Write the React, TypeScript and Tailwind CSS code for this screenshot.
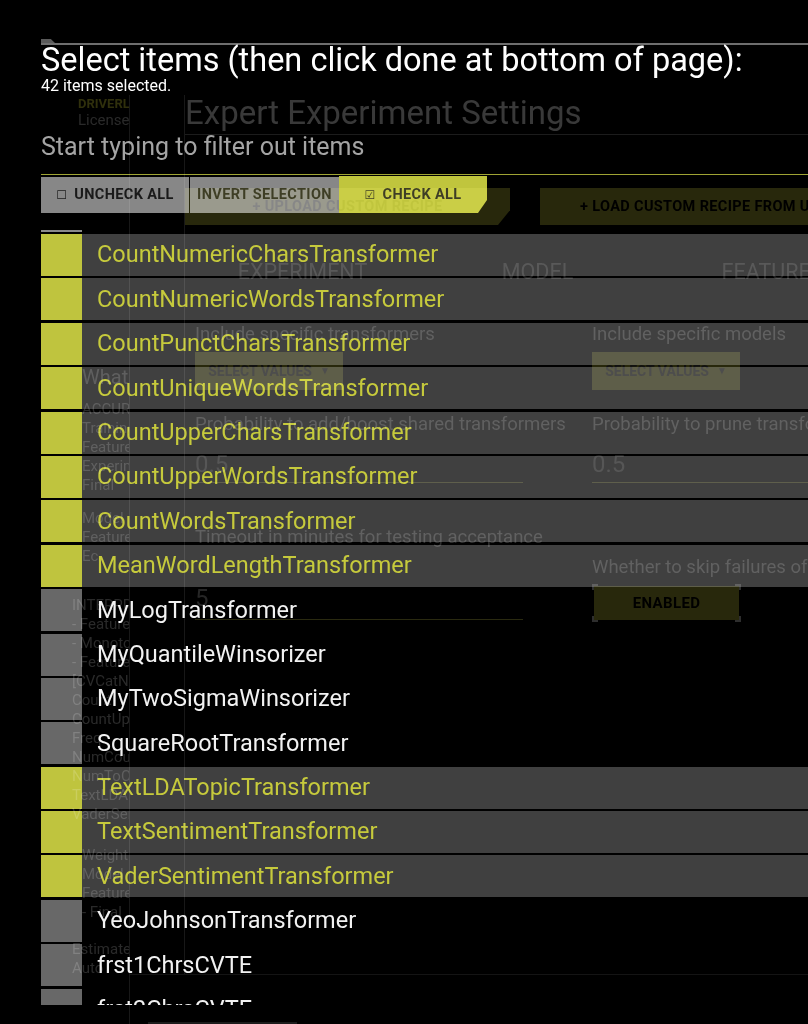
import React from 'react'

const items: [string, boolean][] = [
  ['CountNumericCharsTransformer', true],
  ['CountNumericWordsTransformer', true],
  ['CountPunctCharsTransformer', true],
  ['CountUniqueWordsTransformer', true],
  ['CountUpperCharsTransformer', true],
  ['CountUpperWordsTransformer', true],
  ['CountWordsTransformer', true],
  ['MeanWordLengthTransformer', true],
  ['MyLogTransformer', false],
  ['MyQuantileWinsorizer', false],
  ['MyTwoSigmaWinsorizer', false],
  ['SquareRootTransformer', false],
  ['TextLDATopicTransformer', true],
  ['TextSentimentTransformer', true],
  ['VaderSentimentTransformer', true],
  ['YeoJohnsonTransformer', false],
  ['frst1ChrsCVTE', false],
  ['frst2ChrsCVTE', false],
  ['frst3ChrsCVTE', false],
]

function SidebarLines({ lines, className }: { lines: string[]; className?: string }) {
  return (
    <div className={className}>
      {lines.map((l, i) => (
        <div key={i}>{l}</div>
      ))}
    </div>
  )
}

function Corner({ pos }: { pos: string }) {
  return <span className={`absolute w-[6px] h-[6px] border-[#2e2e2e] ${pos}`} />
}

// page that sits behind the modal
function SettingsPage() {
  return (
    <div className="flex pl-[72px] pt-[95px] h-full">
      {/* summary column, clipped */}
      <aside className="w-[58px] shrink-0 border-r border-[#181818] overflow-hidden pt-[2px] whitespace-nowrap text-[#2a2a2a]">
        <div className="pl-[6px] text-[13px] leading-[13px] font-bold text-[#30300c]">DRIVERLESS</div>
        <div className="pl-[6px] mt-[3px] text-[15px] leading-[15px]">License</div>
        <div className="pl-[10px] mt-[238px] text-[20px] leading-[22px]">What do you</div>
        <SidebarLines
          className="pl-[10px] mt-[12px] text-[15px] leading-[19px]"
          lines={['ACCURACY', 'Training', 'Feature', 'Experiment', 'Final']}
        />
        <SidebarLines className="pl-[10px] mt-[14px] text-[15px] leading-[19px]" lines={['Model', 'Feature', 'Ec']} />
        <SidebarLines
          className="mt-[30px] text-[15px] leading-[19px]"
          lines={['INTERPRET', '- Feature', '- Monotonic', '- Feature', '[CVCatNum', 'Count', 'CountUp', 'Freq', 'NumCount', 'NumToCat', 'TextLDA', 'VaderSent']}
        />
        <SidebarLines className="pl-[10px] mt-[22px] text-[15px] leading-[19px]" lines={['WeightGi', 'Model', 'Feature', '- Final']} />
        <SidebarLines className="mt-[18px] text-[15px] leading-[19px]" lines={['Estimate', 'Auto']} />
      </aside>

      <div className="flex-1 min-w-0">
        <div className="flex h-[880px] border-b border-[#141414]">
          <div className="w-[55px] shrink-0 border-r border-[#181818]" />
          <main className="flex-1 min-w-0 overflow-hidden whitespace-nowrap">
            <h1 className="text-[33px] leading-[36px] text-[#393939] pb-[3px] border-b border-[#1c1c1c]">
              Expert Experiment Settings
            </h1>

            <div className="mt-[53px] flex h-[37px] text-[14.5px] font-bold text-black tracking-wide">
              <div className="w-[325px] shrink-0 bg-[#28280c] flex items-center justify-center [clip-path:polygon(0_0,100%_0,100%_60%,calc(100%-12px)_100%,0_100%)]">
                + UPLOAD CUSTOM RECIPE
              </div>
              <div className="ml-[30px] flex-1 bg-[#28280c] flex items-center pl-[40px]">
                + LOAD CUSTOM RECIPE FROM URL
              </div>
            </div>

            <div className="mt-[35px] flex text-[21.5px] leading-[24px] text-[#222]">
              <div className="w-[235px] shrink-0 text-center">EXPERIMENT</div>
              <div className="w-[235px] shrink-0 text-center">MODEL</div>
              <div className="w-[235px] shrink-0 text-center">FEATURES</div>
            </div>

            <div className="mt-[40px] pl-[10px] grid grid-cols-[397px_1fr] text-[18.5px] leading-[20px] text-[#2c2c2c]">
              <div className="flex flex-col">
                <div>Include specific transformers</div>
                <div className="mt-[8px] w-[148px] h-[38px] bg-[#28280c] flex items-center justify-center gap-2 text-[14px] font-bold text-[#111]">
                  SELECT VALUES <span className="text-[10px]">▼</span>
                </div>
                <div className="mt-[24px]">Probability to add/boost shared transformers</div>
                <div className="mt-[16px] w-[328px] h-[33px] border-b-[1.5px] border-[#2a2a10] text-[24px] leading-[28px] text-[#1e1e1e]">0.5</div>
                <div className="mt-[44px]">Timeout in minutes for testing acceptance</div>
                <div className="mt-[37px] w-[328px] h-[36px] border-b-[1.5px] border-[#2a2a10] text-[24px] leading-[28px] text-[#262626]">5</div>
              </div>
              <div className="flex flex-col">
                <div>Include specific models</div>
                <div className="mt-[8px] w-[148px] h-[38px] bg-[#28280c] flex items-center justify-center gap-2 text-[14px] font-bold text-[#111]">
                  SELECT VALUES <span className="text-[10px]">▼</span>
                </div>
                <div className="mt-[24px]">Probability to prune transformers</div>
                <div className="mt-[16px] h-[33px] border-b-[1.5px] border-[#2a2a10] text-[24px] leading-[28px] text-[#1e1e1e]">0.5</div>
                <div className="mt-[74px]">Whether to skip failures of transformers</div>
                <div className="relative mt-[9px] ml-[2px] w-[145px] h-[34px] bg-[#28280c] flex items-center justify-center text-[15px] font-bold text-black tracking-wide">
                  ENABLED
                  <Corner pos="-left-[2px] -top-[2px] border-l-2 border-t-2" />
                  <Corner pos="-right-[2px] -top-[2px] border-r-2 border-t-2" />
                  <Corner pos="-left-[2px] -bottom-[2px] border-l-2 border-b-2" />
                  <Corner pos="-right-[2px] -bottom-[2px] border-r-2 border-b-2" />
                </div>
              </div>
            </div>
          </main>
        </div>
      </div>
    </div>
  )
}

function SelectModal() {
  return (
    <div className="absolute inset-0 bg-black mix-blend-screen pl-[41px] overflow-hidden whitespace-nowrap">
      <div className="mt-[39px] w-[14px] h-[4px] bg-[#5a5a5a] [clip-path:polygon(0_0,70%_0,100%_100%,0_100%)]" />
      <div className="h-[1.5px] bg-[#6e6e6e]" />
      <h2 className="h-[30px] text-[32.5px] leading-[30px] text-white">
        Select items (then click done at bottom of page):
      </h2>
      <div className="mt-[3.5px] text-[16px] leading-[16px] text-white">42 items selected.</div>
      <div className="mt-[40px] text-[25px] leading-[25px] text-[#a4a4a4]">Start typing to filter out items</div>

      <div className="mt-[15px] h-[1px] bg-[#9fa434]" />
      <div className="mt-[1px] flex h-[37px] font-bold text-[14.5px] text-[#1a1a1a] tracking-wide">
        <button className="mt-[1px] w-[148px] bg-[#878787] flex items-center justify-center gap-[7px]">
          <span className="font-['DejaVu_Sans'] text-[12px] font-normal">☐</span>UNCHECK ALL
        </button>
        <button className="mt-[1px] ml-[1px] w-[149px] bg-[#878787] flex items-center justify-center">INVERT SELECTION</button>
        <button className="w-[148px] bg-[#c0c53d] flex items-center justify-center gap-[7px] [clip-path:polygon(0_0,100%_0,100%_65%,calc(100%-9px)_100%,0_100%)]">
          <span className="font-['DejaVu_Sans'] text-[12px] font-normal">☑</span>CHECK ALL
        </button>
      </div>

      <div className="mt-[17px] w-[41px] h-[1.5px] bg-[#8a8a8a]" />
      <ul className="mt-[2.5px] h-[771px] overflow-hidden flex flex-col gap-[2.4px]">
        {items.map(([name, on]) => (
          <li key={name} className={`flex shrink-0 h-[42px] items-center ${on ? 'bg-[#404040]' : 'bg-black'}`}>
            <span className={`w-[41px] h-full shrink-0 ${on ? 'bg-[#bfc43e]' : 'bg-[#686868]'}`} />
            <span className={`pl-[15px] text-[23.5px] ${on ? 'text-[#c6ca3c]' : 'text-[#f2f2f2]'}`}>{name}</span>
          </li>
        ))}
      </ul>
      <div className="mt-[17px] ml-[107px] w-[149px] h-[2px] bg-[#1c1c1c]" />
    </div>
  )
}

export default function App() {
  return (
    <div className="relative isolate h-[1024px] overflow-hidden bg-black font-['Roboto',sans-serif]">
      <SettingsPage />
      <SelectModal />
    </div>
  )
}
